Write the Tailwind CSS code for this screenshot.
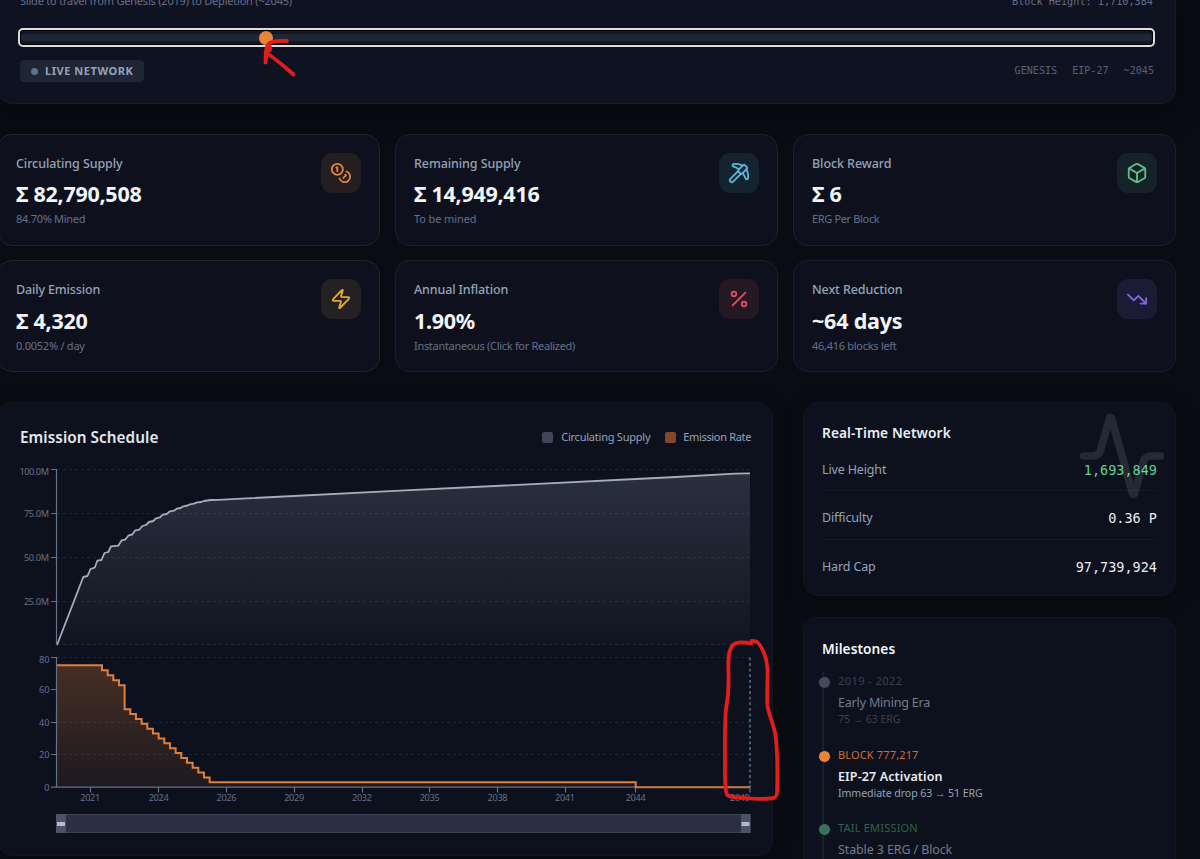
<!DOCTYPE html>
<html lang="en">

<head>
  <meta charset="UTF-8">
  <meta name="viewport" content="width=device-width, initial-scale=1.0">
  <title>Emission Dashboard</title>
  <script src="https://cdn.jsdelivr.net/npm/@tailwindcss/browser@4"></script>
</head>

<body class="bg-[#0a0c13] font-['Noto_Sans','Open_Sans',sans-serif] text-[#f1f5f9] w-[1200px] h-[859px] overflow-hidden relative">
  <main class="-ml-[3px] w-[1179px] h-[859px] overflow-visible">

    <!-- Time travel slider -->
    <section class="h-[104px] rounded-b-[15px] border border-t-0 border-[#161a29] bg-[#0f1220] shadow-[0_8px_30px_rgba(0,0,0,0.35)] pl-[22px] pr-[21px]">
      <div class="flex justify-between h-[28px] text-[#64708a]">
        <p class="text-[11px] leading-[16px] -mt-[7px] tracking-[-0.21px]">Slide to travel from Genesis (2019) to Depletion (~2045)</p>
        <p class="font-['DejaVu_Sans_Mono','Liberation_Mono',monospace] text-[10.2px] leading-[16px] -mt-[6px] mr-px">Block Height: 1,710,384</p>
      </div>
      <div class="-ml-[2px] -mr-[1px] h-[19px] rounded-[5px] border-2 border-[#dcdcde] bg-black p-px">
        <div class="h-full rounded-[3px] bg-[#121724] flex items-center relative">
          <div class="h-[7px] w-full rounded-[3px] bg-[#1f2635]"></div>
          <div class="absolute left-[238px] top-0 size-[14px] rounded-full bg-[#e8833a]"></div>
        </div>
      </div>
      <div class="flex justify-between items-start mt-[13px]">
        <div class="flex items-center w-[124px] h-[22px] rounded-[4px] bg-[#1e2636] pl-[11px] gap-[7px]">
          <span class="size-[7px] rounded-full bg-[#64708a]"></span>
          <span class="text-[11px] font-bold tracking-[0.55px] text-[#94a3b8] whitespace-nowrap">LIVE NETWORK</span>
        </div>
        <div class="flex gap-[15px] h-[22px] items-center font-['DejaVu_Sans_Mono','Liberation_Mono',monospace] text-[10.1px] text-[#566078]">
          <span>GENESIS</span><span>EIP-27</span><span>~2045</span>
        </div>
      </div>
    </section>

    <!-- Stat cards -->
    <section class="grid grid-cols-3 gap-x-[15px] gap-y-[14px] mt-[30px]">
      <div class="h-[112px] rounded-[15px] border border-[#25232b] bg-[#0e111d] px-[18px] pt-[18px] flex justify-between items-start">
        <div>
          <h3 class="text-[12.5px] leading-[20px] mt-px font-medium tracking-[-0.08px] text-[#94a3b8]">Circulating Supply</h3>
          <p class="text-[21.5px] leading-[30px] mt-[5px] font-bold tracking-[-0.27px]">Σ 82,790,508</p>
          <p class="text-[11px] leading-[16px] mt-[2px] tracking-[-0.29px] text-[#64708a]">84.70% Mined</p>
        </div>
        <div class="size-[40px] rounded-[11px] bg-[#241e21] text-[#e8833a] flex items-center justify-center">
          <svg class="size-[22px]" viewBox="0 0 24 24" fill="none" stroke="currentColor" stroke-width="2" stroke-linecap="round" stroke-linejoin="round"><circle cx="8" cy="8" r="6"/><path d="M18.09 10.37A6 6 0 1 1 10.34 18"/><path d="M7 6h1v4"/><path d="m16.71 13.88.7.71-2.82 2.82"/></svg>
        </div>
      </div>

      <div class="h-[112px] rounded-[15px] border border-[#1b222e] bg-[#0e111d] px-[18px] pt-[18px] flex justify-between items-start">
        <div>
          <h3 class="text-[12.5px] leading-[20px] mt-px font-medium tracking-[-0.08px] text-[#94a3b8]">Remaining Supply</h3>
          <p class="text-[21.5px] leading-[30px] mt-[5px] font-bold tracking-[-0.27px]">Σ 14,949,416</p>
          <p class="text-[11px] leading-[16px] mt-[2px] tracking-[-0.1px] text-[#64708a]">To be mined</p>
        </div>
        <div class="size-[40px] rounded-[11px] bg-[#14232f] text-[#5cb6d6] flex items-center justify-center">
          <svg class="size-[22px]" viewBox="0 0 24 24" fill="none" stroke="currentColor" stroke-width="2" stroke-linecap="round" stroke-linejoin="round"><path d="m14 13-8.381 8.38a1 1 0 0 1-3.001-3L11 9.999"/><path d="M15.973 4.027A13 13 0 0 0 5.902 2.373c-1.398.342-1.092 2.158.277 2.601a19.9 19.9 0 0 1 5.822 3.024"/><path d="M16.001 11.999a19.9 19.9 0 0 1 3.024 5.824c.444 1.369 2.26 1.676 2.603.278A13 13 0 0 0 20 8.069"/><path d="M18.352 3.352a1.205 1.205 0 0 0-1.704 0l-5.296 5.296a1.205 1.205 0 0 0 0 1.704l2.296 2.296a1.205 1.205 0 0 0 1.704 0l5.296-5.296a1.205 1.205 0 0 0 0-1.704z"/></svg>
        </div>
      </div>

      <div class="h-[112px] rounded-[15px] border border-[#1b232a] bg-[#0e111d] px-[18px] pt-[18px] flex justify-between items-start">
        <div>
          <h3 class="text-[12.5px] leading-[20px] mt-px font-medium tracking-[-0.08px] text-[#94a3b8]">Block Reward</h3>
          <p class="text-[21.5px] leading-[30px] mt-[5px] font-bold tracking-[-0.27px]">Σ 6</p>
          <p class="text-[11px] leading-[16px] mt-[2px] tracking-[-0.35px] text-[#64708a]">ERG Per Block</p>
        </div>
        <div class="size-[40px] rounded-[11px] bg-[#152328] text-[#5ebf8b] flex items-center justify-center">
          <svg class="size-[22px]" viewBox="0 0 24 24" fill="none" stroke="currentColor" stroke-width="2" stroke-linecap="round" stroke-linejoin="round"><path d="M21 8a2 2 0 0 0-1-1.73l-7-4a2 2 0 0 0-2 0l-7 4A2 2 0 0 0 3 8v8a2 2 0 0 0 1 1.73l7 4a2 2 0 0 0 2 0l7-4A2 2 0 0 0 21 16Z"/><path d="m3.3 7 8.7 5 8.7-5"/><path d="M12 22V12"/></svg>
        </div>
      </div>

      <div class="h-[112px] rounded-[15px] border border-[#25252b] bg-[#0e111d] px-[18px] pt-[18px] flex justify-between items-start">
        <div>
          <h3 class="text-[12.5px] leading-[20px] mt-px font-medium tracking-[-0.14px] text-[#94a3b8]">Daily Emission</h3>
          <p class="text-[21.5px] leading-[30px] mt-[6px] font-bold tracking-[-0.27px]">Σ 4,320</p>
          <p class="text-[11px] leading-[16px] mt-[2px] tracking-[-0.25px] text-[#64708a]">0.0052% / day</p>
        </div>
        <div class="size-[40px] rounded-[11px] bg-[#242122] text-[#e0a73a] flex items-center justify-center">
          <svg class="size-[22px]" viewBox="0 0 24 24" fill="none" stroke="currentColor" stroke-width="2" stroke-linecap="round" stroke-linejoin="round"><path d="M4 14a1 1 0 0 1-.78-1.63l9.9-10.2a.5.5 0 0 1 .86.46l-1.92 6.02A1 1 0 0 0 13 10h7a1 1 0 0 1 .78 1.63l-9.9 10.2a.5.5 0 0 1-.86-.46l1.92-6.02A1 1 0 0 0 11 14z"/></svg>
        </div>
      </div>

      <div class="h-[112px] rounded-[15px] border border-[#261d2a] bg-[#0e111d] px-[18px] pt-[18px] flex justify-between items-start">
        <div>
          <h3 class="text-[12.5px] leading-[20px] mt-px font-medium tracking-[-0.14px] text-[#94a3b8]">Annual Inflation</h3>
          <p class="text-[21.5px] leading-[30px] mt-[6px] font-bold tracking-[-0.27px]">1.90%</p>
          <p class="text-[11px] leading-[16px] mt-[2px] tracking-[-0.31px] text-[#64708a]">Instantaneous (Click for Realized)</p>
        </div>
        <div class="size-[40px] rounded-[11px] bg-[#241824] text-[#df4f5f] flex items-center justify-center">
          <svg class="size-[22px]" viewBox="0 0 24 24" fill="none" stroke="currentColor" stroke-width="2" stroke-linecap="round" stroke-linejoin="round"><path d="M19 5 5 19"/><circle cx="6.5" cy="6.5" r="2.5"/><circle cx="17.5" cy="17.5" r="2.5"/></svg>
        </div>
      </div>

      <div class="h-[112px] rounded-[15px] border border-[#1c1e30] bg-[#0e111d] px-[18px] pt-[18px] flex justify-between items-start">
        <div>
          <h3 class="text-[12.5px] leading-[20px] mt-px font-medium tracking-[-0.1px] text-[#94a3b8]">Next Reduction</h3>
          <p class="text-[21.5px] leading-[30px] mt-[6px] font-bold tracking-[-0.2px]">~64 days</p>
          <p class="text-[11px] leading-[16px] mt-[2px] tracking-[-0.28px] text-[#64708a]">46,416 blocks left</p>
        </div>
        <div class="size-[40px] rounded-[11px] bg-[#1b1b36] text-[#8465e0] flex items-center justify-center">
          <svg class="size-[22px]" viewBox="0 0 24 24" fill="none" stroke="currentColor" stroke-width="2" stroke-linecap="round" stroke-linejoin="round"><path d="M16 17h6v-6"/><path d="m22 17-8.5-8.5-5 5L2 7"/></svg>
        </div>
      </div>
    </section>

    <div class="flex gap-[30px] items-start mt-[30px]">
      <!-- Emission chart -->
      <section class="w-[776px] h-[454px] rounded-[15px] border border-[#131724] bg-[#0d111d] shadow-[0_4px_20px_rgba(0,0,0,0.25)] pl-[22px] pr-[21px] pt-[22px] shrink-0">
        <div class="flex justify-between items-center h-[24px]">
          <h2 class="text-[15.3px] font-semibold tracking-[0.05px] text-[#e2e8f0]">Emission Schedule</h2>
          <div class="flex items-center text-[11px] text-[#94a3b8]">
            <span class="size-[11px] rounded-[2px] bg-[#404558] mr-[8px]"></span>
            <span class="tracking-[-0.23px]">Circulating Supply</span>
            <span class="size-[11px] rounded-[2px] bg-[#81492a] ml-[15px] mr-[7px]"></span>
            <span class="tracking-[-0.34px]">Emission Rate</span>
          </div>
        </div>
        <svg class="block w-[732px] h-[384px] mt-[11px] overflow-visible" viewBox="20 460 732 384" fill="none">
          <defs>
            <linearGradient id="supply" gradientUnits="userSpaceOnUse" x1="0" y1="473" x2="0" y2="645">
              <stop offset="0" stop-color="#94a3b8" stop-opacity="0.21"/>
              <stop offset="1" stop-color="#94a3b8" stop-opacity="0.03"/>
            </linearGradient>
            <linearGradient id="rate" gradientUnits="userSpaceOnUse" x1="0" y1="665" x2="0" y2="787">
              <stop offset="0" stop-color="#e8833a" stop-opacity="0.26"/>
              <stop offset="1" stop-color="#e8833a" stop-opacity="0.07"/>
            </linearGradient>
          </defs>

          <!-- cumulative supply -->
          <path fill="url(#supply)" d="M57 645L83.3 577L87.5 576L90.5 569L94.7 567.7L97.3 560.7L101.5 560L104.5 553L108.3 552L111 546.3L118.3 545.7L121.7 540.3L125.3 539.5L128.7 535.3L132.3 534.5L135.3 530.3L139.3 529.7L142.3 526L146 525L149 522L153.3 521L156 518.3L160 517.3L162.7 514.7L166.7 514L170 511.3L174 510.7L176.7 508.7L180.7 508L183.3 506.3L187.7 505.5L190 504.3L194 503.7L197.3 502.3L201.3 502L204 501L210.7 500L218 499.8L400 490.7L676 477L735 473.7L750 473.3V645Z"/>
          <g stroke="#94a3b8" stroke-opacity="0.14" stroke-dasharray="3 3">
            <path d="M57 469.5H750M57 513.5H750M57 557.5H750M57 601.5H750M57 644.5H750"/>
          </g>
          <path stroke="#a3adc0" stroke-width="1.8" stroke-linejoin="round" d="M57 645L83.3 577L87.5 576L90.5 569L94.7 567.7L97.3 560.7L101.5 560L104.5 553L108.3 552L111 546.3L118.3 545.7L121.7 540.3L125.3 539.5L128.7 535.3L132.3 534.5L135.3 530.3L139.3 529.7L142.3 526L146 525L149 522L153.3 521L156 518.3L160 517.3L162.7 514.7L166.7 514L170 511.3L174 510.7L176.7 508.7L180.7 508L183.3 506.3L187.7 505.5L190 504.3L194 503.7L197.3 502.3L201.3 502L204 501L210.7 500L218 499.8L400 490.7L676 477L735 473.7L750 473.3"/>
          <path stroke="#697186" stroke-width="1.2" d="M51 469.5H56.5V645M51 513.5H56.5M51 557.5H56.5M51 601.5H56.5"/>

          <!-- emission rate -->
          <g stroke="#94a3b8" stroke-opacity="0.14" stroke-dasharray="3 3">
            <path d="M57 657.5H750M57 722.5H750M57 754.5H750"/>
          </g>
          <path fill="url(#rate)" d="M57 665.3H102v5h5.7v5h5.6v5h5.7v5h5.6V709.2h5.67v4.87h5.67v4.87h5.67v4.87h5.67v4.87h5.67v4.87h5.67v4.87h5.67v4.87h5.67v4.87h5.67v4.87h5.67v4.87h5.67v4.87h5.67v4.87h5.67v4.87h5.67v4.87h5.67V782.3H635.7V787H57Z"/>
          <path stroke="#697186" stroke-width="1.2" d="M51 657.5H56.5V787M51 689.5H56.5M51 722.5H56.5M51 754.5H56.5M51 787.2H635M90.5 787V792.5M158.5 787V792.5M226.5 787V792.5M294.5 787V792.5M362.5 787V792.5M429.5 787V792.5M497.5 787V792.5M565.5 787V792.5M635.5 788V792.5M750 785V792.5"/>
          <path stroke="#e07f3a" stroke-width="2" d="M57 665.3H102v5h5.7v5h5.6v5h5.7v5h5.6V709.2h5.67v4.87h5.67v4.87h5.67v4.87h5.67v4.87h5.67v4.87h5.67v4.87h5.67v4.87h5.67v4.87h5.67v4.87h5.67v4.87h5.67v4.87h5.67v4.87h5.67v4.87h5.67v4.87h5.67V782.3H635.7V787.3H750"/>
          <path stroke="#8a8290" stroke-opacity="0.8" stroke-width="1.2" d="M636.500 787.3H750"/>
          <path stroke="#5f7f9e" stroke-width="1.4" stroke-dasharray="2.8 2.8" d="M750 657.5V787"/>

          <g fill="#64708a" class="font-['Noto_Sans',sans-serif] text-[9.2px]" text-anchor="end">
            <text x="49" y="475" textLength="29.5">100.0M</text>
            <text x="49" y="516.5" textLength="25">75.0M</text>
            <text x="49" y="560.5" textLength="25">50.0M</text>
            <text x="49" y="604.5" textLength="25">25.0M</text>
            <text x="49.5" y="663">80</text>
            <text x="49.5" y="693">60</text>
            <text x="49.5" y="725.5">40</text>
            <text x="49.5" y="758">20</text>
            <text x="49.5" y="790.5">0</text>
            <text x="750" y="801.3" textLength="20">2049</text>
          </g>
          <g fill="#64708a" class="font-['Noto_Sans',sans-serif] text-[9.2px]" text-anchor="middle">
            <text x="90.3" y="801.3" textLength="20">2021</text>
            <text x="158.7" y="801.3" textLength="20">2024</text>
            <text x="226.5" y="801.3" textLength="20">2026</text>
            <text x="294.2" y="801.3" textLength="20">2029</text>
            <text x="362" y="801.3" textLength="20">2032</text>
            <text x="429.7" y="801.3" textLength="20">2035</text>
            <text x="497.6" y="801.3" textLength="20">2038</text>
            <text x="565" y="801.3" textLength="20">2041</text>
            <text x="635.7" y="801.3" textLength="20">2044</text>
          </g>

          <!-- range brush -->
          <rect x="56.5" y="814.5" width="693.5" height="18" fill="#2c3044" stroke="#3c4253"/>
          <rect x="56" y="814" width="10" height="19" fill="#4b5266"/>
          <rect x="57" y="822" width="8" height="4" fill="#b3b9c6"/>
          <rect x="741" y="814" width="9.5" height="19" fill="#4b5266"/>
          <rect x="741.5" y="822" width="8" height="4" fill="#b3b9c6"/>
        </svg>
      </section>

      <div class="w-[373px] shrink-0 flex flex-col gap-[21px]">
        <!-- Network -->
        <section class="relative h-[194px] rounded-[15px] border border-[#131724] bg-[#0d111d] shadow-[0_4px_20px_rgba(0,0,0,0.25)] px-[18px] pt-[18px]">
          <h2 class="text-[13.7px] leading-[24px] font-semibold tracking-[0.1px] text-[#e8edf4]">Real-Time Network</h2>
          <div class="flex justify-between items-center h-[46px] pt-[5px] border-b border-[#151a27]">
            <span class="text-[12.5px] tracking-[-0.15px] text-[#94a3b8]">Live Height</span>
            <span class="font-['DejaVu_Sans_Mono','Liberation_Mono',monospace] text-[13.5px] text-[#5fd392]">1,693,849</span>
          </div>
          <div class="flex justify-between items-center h-[49px] pt-[7px] border-b border-[#151a27]">
            <span class="text-[12.5px] tracking-[-0.15px] text-[#94a3b8]">Difficulty</span>
            <span class="font-['DejaVu_Sans_Mono','Liberation_Mono',monospace] text-[13.5px] text-[#e8edf4]">0.36 P</span>
          </div>
          <div class="flex justify-between items-center h-[49px] pt-[5px]">
            <span class="text-[12.5px] tracking-[-0.15px] text-[#94a3b8]">Hard Cap</span>
            <span class="font-['DejaVu_Sans_Mono','Liberation_Mono',monospace] text-[13.5px] text-[#e8edf4]">97,739,924</span>
          </div>
          <svg class="absolute right-[7px] top-[7px] size-[92px] text-white/10" viewBox="0 0 24 24" fill="none" stroke="currentColor" stroke-width="2" stroke-linecap="round" stroke-linejoin="round"><path d="M22 12h-2.48a2 2 0 0 0-1.93 1.46l-2.35 8.36a.25.25 0 0 1-.48 0L9.24 2.18a.25.25 0 0 0-.48 0l-2.35 8.36A2 2 0 0 1 4.49 12H2"/></svg>
        </section>

        <!-- Milestones -->
        <section class="h-[242px] overflow-hidden rounded-t-[15px] border border-b-0 border-[#131724] bg-[#0d111d] px-[18px] pt-[19px]">
          <h2 class="text-[13.7px] leading-[24px] font-semibold tracking-[0.05px] text-[#f1f5f9]">Milestones</h2>
          <div class="border-l-2 border-[#1a202d] mt-[11px] pl-[14px] pt-px h-[187px]">
            <div class="relative h-[73.5px]">
              <span class="absolute -left-[20px] top-[3px] size-[13px] rounded-full border border-[#10141f] bg-[#434a5c]"></span>
              <p class="text-[11px] leading-[15px] tracking-[0.45px] text-[#3a4152]">2019 - 2022</p>
              <h4 class="text-[12.5px] leading-[20px] mt-[5px] tracking-[-0.18px] text-[#747b8b]">Early Mining Era</h4>
              <p class="text-[10.6px] leading-[12px] tracking-[-0.08px] text-[#3a4152]">75 → 63 ERG</p>
            </div>
            <div class="relative h-[73.5px]">
              <span class="absolute -left-[20px] top-[3px] size-[13px] rounded-full border border-[#10141f] bg-[#e8833a]"></span>
              <p class="text-[11px] leading-[15px] tracking-[0.15px] text-[#d3693a]">BLOCK 777,217</p>
              <h4 class="text-[12.5px] leading-[20px] mt-[5px] font-semibold tracking-[0.12px] text-[#e8edf4]">EIP-27 Activation</h4>
              <p class="text-[10.6px] leading-[12px] tracking-[-0.08px] text-[#94a3b8]">Immediate drop 63 → 51 ERG</p>
            </div>
            <div class="relative">
              <span class="absolute -left-[20px] top-[3px] size-[13px] rounded-full border border-[#10141f] bg-[#39705a]"></span>
              <p class="text-[11px] leading-[15px] tracking-[0.2px] text-[#32604c]">TAIL EMISSION</p>
              <h4 class="text-[12.5px] leading-[20px] mt-[5px] tracking-[-0.12px] text-[#747b8b]">Stable 3 ERG / Block</h4>
            </div>
          </div>
        </section>
      </div>
    </div>
  </main>

  <!-- Pen annotations -->
  <svg class="absolute left-0 top-0 w-[1200px] h-[859px] pointer-events-none" viewBox="0 0 1200 859" fill="none" stroke="#e11d1d" stroke-width="3.8" stroke-linecap="round" stroke-linejoin="round">
    <path d="M287 41C279 40.5 273 40.5 269.500 43C266 46 265.500 52 265.500 62.500M265.500 62C266 57 267 52 269 49.500M270 47V50M268 54C276 59 286 68 293.500 74.500"/>
    <path d="M751 643.500C744 642 736 641.500 732.500 645.500C728 650 728 662 728.500 675C729 691 728 699 726 709C724.500 722 725 745 725 765C725 780 724.500 790 727 794.500C729 797.500 735 797 742 797.500C750 799 762 799 770 798.500C775 798.500 776.500 797 777 793C777.500 776 777.500 752 775.500 735C774 725 769 716 767.500 706C766.500 693 768 682 767.500 668C766.500 656 761 645 757 642C755 641 753 641 751.500 641"/>
  </svg>
</body>

</html>
